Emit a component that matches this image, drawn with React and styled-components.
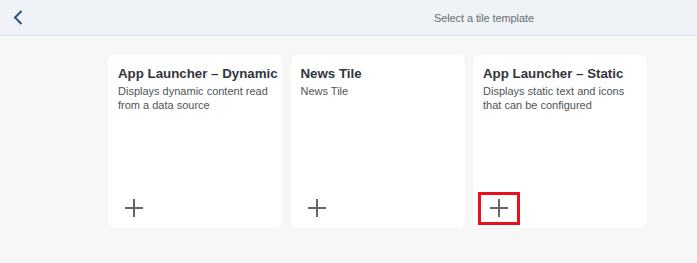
import React from "react";
import styled, { createGlobalStyle } from "styled-components";

const Global = createGlobalStyle`
  html, body { margin: 0; padding: 0; }
  body {
    background: #f7f7f7;
    font-family: "Liberation Sans", Arial, sans-serif;
    width: 697px;
    height: 263px;
    overflow: hidden;
  }
`;

const Page = styled.div`
  display: flex;
  flex-direction: column;
  height: 263px;
  background: #f7f7f7;
`;

const Header = styled.header`
  display: flex;
  align-items: center;
  height: 35px;
  background: #eff3f8;
  border-bottom: 1px solid #d8e3ef;
`;

const BackButton = styled.button`
  display: flex;
  align-items: center;
  justify-content: center;
  width: 36px;
  height: 35px;
  padding: 0 1px 0 0;
  border: 0;
  background: transparent;
  cursor: pointer;
`;

const Title = styled.h1`
  margin: 0 0 0 398px;
  font-size: 11px;
  font-weight: normal;
  color: #6a6d70;
  letter-spacing: -0.1px;
`;

const Grid = styled.div`
  display: grid;
  grid-template-columns: repeat(3, 174px);
  column-gap: 8.5px;
  padding: 18px 0 0 108px;
`;

const Card = styled.div`
  display: flex;
  flex-direction: column;
  height: 174px;
  background: #ffffff;
  border-radius: 5px;
  box-shadow: 0 0 1px rgba(0, 0, 0, 0.12);
`;

const CardHead = styled.div`
  padding: 11px 6px 0 10px;
`;

const CardTitle = styled.div`
  font-size: 13.3px;
  font-weight: bold;
  color: #32363a;
  line-height: 17px;
  white-space: nowrap;
`;

const CardDesc = styled.div`
  margin-top: 3px;
  font-size: 11px;
  line-height: 13.5px;
  color: #515456;
`;

const AddButton = styled.button`
  display: flex;
  align-items: flex-start;
  justify-content: center;
  width: 42px;
  height: 33px;
  margin: auto 0 3px 5px;
  padding: 4px 0 0;
  background: transparent;
  border: 3px solid ${(p) => (p.$highlight ? "#e8101c" : "transparent")};
  cursor: pointer;
`;

const PlusIcon = () => (
  <svg width="18" height="18" viewBox="0 0 18 18">
    <path d="M9 0V18M0 9H18" stroke="#666666" strokeWidth="2" fill="none" />
  </svg>
);

const Chevron = () => (
  <svg width="10" height="15" viewBox="0 0 10 15">
    <path d="M8.5 1L2 7.5L8.5 14" stroke="#2b5179" strokeWidth="2" fill="none" />
  </svg>
);

const tiles = [
  {
    title: "App Launcher – Dynamic",
    desc: "Displays dynamic content read from a data source",
  },
  { title: "News Tile", desc: "News Tile" },
  {
    title: "App Launcher – Static",
    desc: "Displays static text and icons that can be configured",
    highlight: true,
  },
];

export default function App() {
  return (
    <Page>
      <Global />
      <Header>
        <BackButton aria-label="Back">
          <Chevron />
        </BackButton>
        <Title>Select a tile template</Title>
      </Header>
      <Grid>
        {tiles.map((t) => (
          <Card key={t.title}>
            <CardHead>
              <CardTitle>{t.title}</CardTitle>
              <CardDesc>{t.desc}</CardDesc>
            </CardHead>
            <AddButton $highlight={t.highlight} aria-label="Add">
              <PlusIcon />
            </AddButton>
          </Card>
        ))}
      </Grid>
    </Page>
  );
}
